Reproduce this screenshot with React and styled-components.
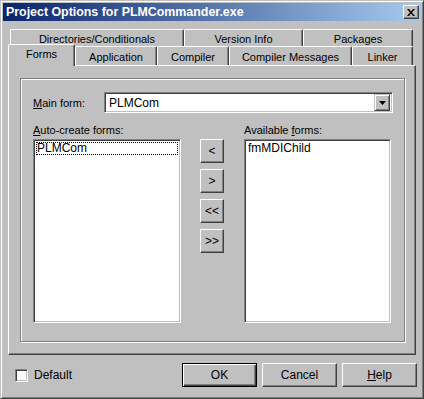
import styled, { createGlobalStyle } from 'styled-components'

const face = '#c0c0c0'
const shadow = '#808080'
const dark = '#404040'

const GlobalStyle = createGlobalStyle`
	html, body {
		margin: 0;
		padding: 0;
		background: ${face};
	}
	body {
		font-family: "Liberation Sans", Arial, sans-serif;
		font-size: 11px;
		color: #000;
	}
`

const Window = styled.div`
	width: 424px;
	height: 399px;
	box-sizing: border-box;
	background: ${face};
	border-top: 1px solid ${face};
	border-left: 1px solid ${face};
	border-right: 1px solid ${dark};
	border-bottom: 1px solid ${dark};
	box-shadow: inset 1px 1px 0 #fff, inset -1px -1px 0 ${shadow};
	padding: 2px;
	display: flex;
	flex-direction: column;
`

const TitleBar = styled.div`
	height: 18px;
	flex: none;
	display: flex;
	align-items: center;
	justify-content: space-between;
	padding: 0 2px 0 3px;
	background: linear-gradient(to right, #0a246a, #a6caf0);
	color: #fff;
	font-weight: bold;
	font-size: 12.4px;
`

const CloseButton = styled.div`
	width: 16px;
	height: 14px;
	box-sizing: border-box;
	background: ${face};
	border-top: 1px solid #fff;
	border-left: 1px solid #fff;
	border-right: 1px solid ${dark};
	border-bottom: 1px solid ${dark};
	box-shadow: inset -1px -1px 0 ${shadow};
	display: flex;
	align-items: center;
	justify-content: center;
`

const Main = styled.div`
	padding: 8px 5px 0 5px;
	display: flex;
	flex-direction: column;
`

const TabRow = styled.div`
	display: flex;
	height: ${p => p.$h}px;
	padding-left: ${p => p.$indent}px;
`

const Tab = styled.div`
	position: relative;
	width: ${p => p.$w}px;
	box-sizing: border-box;
	background: ${face};
	border-top: 1px solid #fff;
	border-left: 1px solid #fff;
	border-right: 1px solid ${dark};
	box-shadow: inset -1px 0 0 ${shadow};
	border-radius: 2px 2px 0 0;
	display: flex;
	align-items: center;
	justify-content: center;
	padding-top: 1px;
	${p => p.$active && `
		margin-top: -2px;
		height: calc(100% + 3px);
		z-index: 1;
		padding-bottom: 4px;
	`}
`

const Panel = styled.div`
	height: 290px;
	box-sizing: border-box;
	border-top: 1px solid #fff;
	border-left: 1px solid #fff;
	border-right: 1px solid ${dark};
	border-bottom: 1px solid ${dark};
	box-shadow: inset -1px -1px 0 ${shadow};
	padding: 12px 10px 0 11px;
`

const Bevel = styled.div`
	height: 264px;
	box-sizing: border-box;
	border: 1px solid ${shadow};
	box-shadow: inset 1px 1px 0 #fff, 1px 1px 0 #fff;
	padding: 13px 11px 0 12px;
`

const FieldRow = styled.div`
	display: flex;
	align-items: center;
`

const Label = styled.div`
	width: ${p => (p.$w ? `${p.$w}px` : 'auto')};
	flex: none;
	white-space: nowrap;
`

const Combo = styled.div`
	flex: 1;
	height: 21px;
	box-sizing: border-box;
	background: #fff;
	border-top: 1px solid ${shadow};
	border-left: 1px solid ${shadow};
	border-right: 1px solid #fff;
	border-bottom: 1px solid #fff;
	box-shadow: inset 1px 1px 0 ${dark}, inset -1px -1px 0 ${face};
	display: flex;
	align-items: center;
	justify-content: space-between;
	padding: 2px 2px 2px 4px;
	font-size: 12px;
`

const DropButton = styled.div`
	width: 16px;
	height: 17px;
	box-sizing: border-box;
	background: ${face};
	border-top: 1px solid ${face};
	border-left: 1px solid ${face};
	border-right: 1px solid ${dark};
	border-bottom: 1px solid ${dark};
	box-shadow: inset 1px 1px 0 #fff, inset -1px -1px 0 ${shadow};
	display: flex;
	align-items: center;
	justify-content: center;
`

const Columns = styled.div`
	margin-top: 11px;
	display: grid;
	grid-template-columns: 148px 63px 147px;
	grid-template-rows: 13px 184px;
	row-gap: 2px;
`

const ListBox = styled.div`
	grid-row: 2;
	grid-column: ${p => p.$col};
	box-sizing: border-box;
	background: #fff;
	border-top: 1px solid ${shadow};
	border-left: 1px solid ${shadow};
	border-right: 1px solid #fff;
	border-bottom: 1px solid #fff;
	box-shadow: inset 1px 1px 0 ${dark}, inset -1px -1px 0 ${face};
	padding: 2px;
	font-size: 12px;
`

const ListItem = styled.div`
	height: 13px;
	line-height: 13px;
	padding-left: 1px;
	outline: ${p => (p.$focus ? '1px dotted #000' : 'none')};
	outline-offset: -1px;
`

const MoveButtons = styled.div`
	grid-row: 2;
	grid-column: 2;
	padding-left: 19px;
	display: flex;
	flex-direction: column;
	gap: 6px;
`

const Button = styled.div`
	width: ${p => p.$w}px;
	height: 24px;
	box-sizing: border-box;
	background: ${face};
	border-top: 1px solid #fff;
	border-left: 1px solid #fff;
	border-right: 1px solid ${dark};
	border-bottom: 1px solid ${dark};
	box-shadow: inset -1px -1px 0 ${shadow};
	display: flex;
	align-items: center;
	justify-content: center;
	font-size: 12px;
	${p => p.$default && `
		border: 1px solid #000;
		box-shadow: inset 1px 1px 0 #fff, inset -1px -1px 0 ${dark}, inset -2px -2px 0 ${shadow};
	`}
`

const Footer = styled.div`
	display: flex;
	align-items: center;
	padding: 8px 4px 0 12px;
	height: 24px;
`

const CheckLabel = styled.div`
	display: flex;
	align-items: center;
	gap: 6px;
	flex: 1;
	font-size: 12px;
`

const CheckBox = styled.div`
	width: 13px;
	height: 13px;
	box-sizing: border-box;
	background: #fff;
	border-top: 1px solid ${shadow};
	border-left: 1px solid ${shadow};
	border-right: 1px solid #fff;
	border-bottom: 1px solid #fff;
	box-shadow: inset 1px 1px 0 ${dark}, inset -1px -1px 0 ${face};
`

const ButtonRow = styled.div`
	display: flex;
	gap: 5px;
`

const Key = styled.span`
	text-decoration: underline;
`

const topTabs = [
	['Directories/Conditionals', 174],
	['Version Info', 119],
	['Packages', 110],
]

const bottomTabs = [
	['Forms', 67],
	['Application', 82],
	['Compiler', 72],
	['Compiler Messages', 123],
	['Linker', 61],
]

const App = () => {
	return (
		<>
			<GlobalStyle />
			<Window>
				<TitleBar>
					<span>Project Options for PLMCommander.exe</span>
					<CloseButton>
						<svg width="8" height="7" viewBox="0 0 8 7">
							<path d="M0 0h2l2 2.5L6 0h2L5 3.5 8 7H6L4 4.5 2 7H0l3-3.5z" fill="#000" />
						</svg>
					</CloseButton>
				</TitleBar>
				<Main>
					<TabRow $h={17} $indent={2}>
						{topTabs.map(([name, w]) => (
							<Tab key={name} $w={w}>{name}</Tab>
						))}
					</TabRow>
					<TabRow $h={19} $indent={0}>
						{bottomTabs.map(([name, w], i) => (
							<Tab key={name} $w={w} $active={i === 0}>{name}</Tab>
						))}
					</TabRow>
					<Panel>
						<Bevel>
							<FieldRow>
								<Label $w={71}><Key>M</Key>ain form:</Label>
								<Combo>
									<span>PLMCom</span>
									<DropButton>
										<svg width="7" height="4" viewBox="0 0 7 4">
											<path d="M0 0h7L3.5 4z" fill="#000" />
										</svg>
									</DropButton>
								</Combo>
							</FieldRow>
							<Columns>
								<Label><Key>A</Key>uto-create forms:</Label>
								<div />
								<Label>Available <Key>f</Key>orms:</Label>
								<ListBox $col={1}>
									<ListItem $focus>PLMCom</ListItem>
								</ListBox>
								<MoveButtons>
									<Button $w={24}>&lt;</Button>
									<Button $w={24}>&gt;</Button>
									<Button $w={24}>&lt;&lt;</Button>
									<Button $w={24}>&gt;&gt;</Button>
								</MoveButtons>
								<ListBox $col={3}>
									<ListItem>fmMDIChild</ListItem>
								</ListBox>
							</Columns>
						</Bevel>
					</Panel>
				</Main>
				<Footer>
					<CheckLabel>
						<CheckBox />
						<span>Default</span>
					</CheckLabel>
					<ButtonRow>
						<Button $w={75} $default>OK</Button>
						<Button $w={75}>Cancel</Button>
						<Button $w={75}><span><Key>H</Key>elp</span></Button>
					</ButtonRow>
				</Footer>
			</Window>
		</>
	)
}

export default App
